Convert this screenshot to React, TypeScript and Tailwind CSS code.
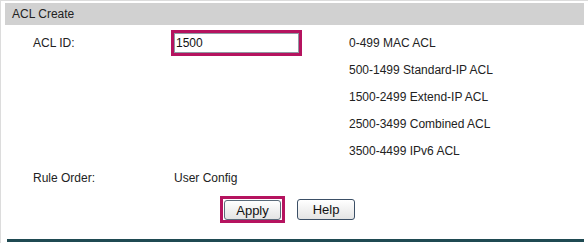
import React from 'react';

const ranges = [
  '0-499 MAC ACL',
  '500-1499 Standard-IP ACL',
  '1500-2499 Extend-IP ACL',
  '2500-3499 Combined ACL',
  '3500-4499 IPv6 ACL',
];

export default function App() {
  return (
    <div className="w-[588px] h-[243px] bg-white border-l border-t border-[#dcdcdc] font-['Liberation_Sans',Arial,sans-serif] text-[12px] text-[#222] overflow-hidden">
      {/* Header */}
      <div className="ml-[4px] mt-[2px] w-[579px] h-[22px] bg-[#d1d1d1] flex items-center pl-[7px]">
        ACL Create
      </div>

      {/* Form */}
      <div className="mt-[4px] grid grid-cols-[138px_178px_1fr] pl-[32px] auto-rows-[27px] items-center">
        <div>ACL ID:</div>
        <div>
          <div className="w-[131px] h-[26px] border-[3px] border-[#b5135f] flex items-center">
            <input
              defaultValue="1500"
              className="w-full h-[20px] border border-[#8f9aa3] bg-white px-[1px] text-[12px] text-[#111] outline-none"
            />
          </div>
        </div>
        <div>{ranges[0]}</div>

        {ranges.slice(1).map((r) => (
          <React.Fragment key={r}>
            <div />
            <div />
            <div>{r}</div>
          </React.Fragment>
        ))}

        <div>Rule Order:</div>
        <div className="pl-[3px]">User Config</div>
        <div />
      </div>

      {/* Buttons */}
      <div className="mt-[5px] flex items-center pl-[219px] gap-[12px]">
        <div className="w-[65px] h-[27px] border-[3px] border-[#b5135f] flex items-center justify-center">
          <button className="w-[57px] h-[20px] rounded-[3px] border border-[#5b6b7a] bg-gradient-to-b from-[#ffffff] to-[#e4e4e4] text-[13px] text-[#111]">
            Apply
          </button>
        </div>
        <button className="w-[58px] h-[21px] rounded-[3px] border border-[#3b4f66] bg-gradient-to-b from-[#ffffff] to-[#e4e4e4] text-[13px] text-[#111]">
          Help
        </button>
      </div>

      {/* Bottom line */}
      <div className="mt-[16px] ml-[6px] w-[577px] h-[3px] bg-[#1f4a52]" />
    </div>
  );
}
